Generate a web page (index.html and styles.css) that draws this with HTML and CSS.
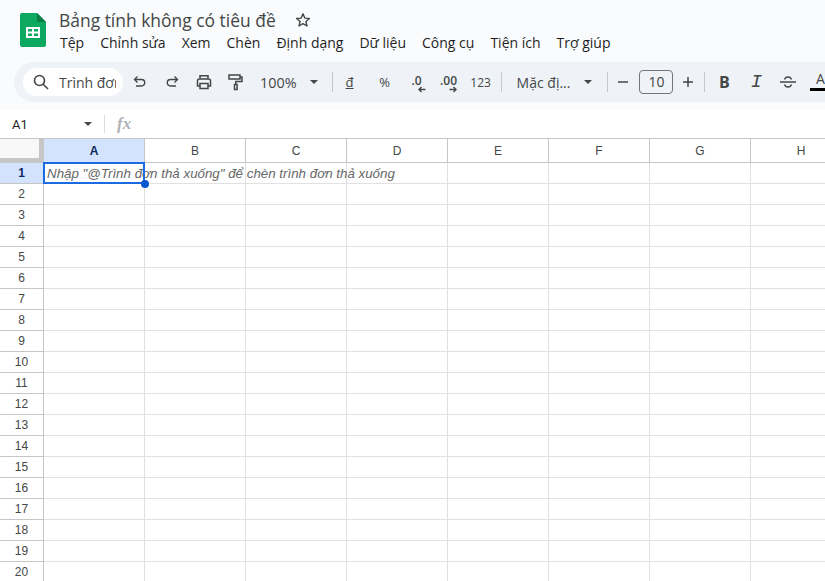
FILE: index.html
```html
<!DOCTYPE html>
<html lang="vi">
<head>
    <meta charset="UTF-8">
    <title>Bảng tính không có tiêu đề</title>
    <link rel="stylesheet" href="styles.css">
</head>

<body>
    <header class="top">
        <div class="title-bar">
            <svg class="logo" width="28" height="36" viewBox="0 0 28 36">
                <path d="M3 1h15l9 9v23a2 2 0 0 1-2 2H3a2 2 0 0 1-2-2V3a2 2 0 0 1 2-2z" fill="#0da960"/>
                <path d="M18 1l9 9h-7a2 2 0 0 1-2-2z" fill="#0a7d47"/>
                <path d="M7 15h14v11H7z M9 17v2.5h4V17z M15 17v2.5h4V17z M9 21.500v2.500h4v-2.500z M15 21.500v2.500h4v-2.500z" fill="#fff" fill-rule="evenodd"/>
            </svg>
            <div class="title-text">
                <div class="doc-title">
                    <span>Bảng tính không có tiêu đề</span>
                    <svg class="star" width="16" height="16" viewBox="0 0 16 16">
                        <path d="M8 1.800l1.800 4.300 4.600.4-3.500 3 1.100 4.500L8 11.600 4 14l1.100-4.500-3.500-3 4.600-.4z" fill="none" stroke="#444746" stroke-width="1.400" stroke-linejoin="round"/>
                    </svg>
                </div>
                <nav class="menu">
                    <span>Tệp</span>
                    <span>Chỉnh sửa</span>
                    <span>Xem</span>
                    <span>Chèn</span>
                    <span>Định dạng</span>
                    <span>Dữ liệu</span>
                    <span>Công cụ</span>
                    <span>Tiện ích</span>
                    <span>Trợ giúp</span>
                </nav>
            </div>
        </div>

        <div class="toolbar">
            <div class="search">
                <svg width="18" height="18" viewBox="0 0 18 18">
                    <circle cx="7.500" cy="7.500" r="5" fill="none" stroke="#444746" stroke-width="1.600"/>
                    <path d="M11.200 11.200L16 16" stroke="#444746" stroke-width="1.600"/>
                </svg>
                <span class="search-text">Trình đơn</span>
            </div>
            <button class="tool first-tool">
                <svg width="16" height="16" viewBox="0 0 16 16"><path d="M5.500 2.500L2.500 5.500l3 3M2.500 5.500h7a3.250 3.250 0 0 1 0 6.500H4" fill="none" stroke="#444746" stroke-width="1.400"/></svg>
            </button>
            <button class="tool">
                <svg width="16" height="16" viewBox="0 0 16 16"><path d="M10.500 2.500l3 3-3 3M13.500 5.500h-7a3.250 3.250 0 0 0 0 6.500H12" fill="none" stroke="#444746" stroke-width="1.400"/></svg>
            </button>
            <button class="tool">
                <svg width="18" height="18" viewBox="0 0 18 18"><path d="M5 6V2.800h8V6M5 13H2.500V7.800a1.800 1.800 0 0 1 1.800-1.800h9.400a1.800 1.800 0 0 1 1.800 1.800V13H13M5 10.500h8v5H5z" fill="none" stroke="#444746" stroke-width="1.500"/></svg>
            </button>
            <button class="tool">
                <svg width="18" height="18" viewBox="0 0 18 18"><path d="M2 2h11v4H2zM13 4h2v4.500H8.800v3M7.500 11.500h2.600v5H7.500z" fill="none" stroke="#444746" stroke-width="1.500"/></svg>
            </button>
            <span class="zoom-value">100%</span>
            <span class="caret"></span>
            <span class="sep sep-zoom"></span>
            <span class="tool text-tool currency">đ</span>
            <span class="tool text-tool percent">%</span>
            <span class="tool text-tool decimals">.0
                <svg class="arrow" width="9" height="7" viewBox="0 0 9 7"><path d="M8.500 3.500H2M4.500 1L2 3.500 4.500 6" fill="none" stroke="#444746" stroke-width="1.400"/></svg>
            </span>
            <span class="tool text-tool decimals">.00
                <svg class="arrow" width="9" height="7" viewBox="0 0 9 7"><path d="M.5 3.500H7M4.500 1L7 3.500 4.500 6" fill="none" stroke="#444746" stroke-width="1.400"/></svg>
            </span>
            <span class="tool text-tool number">123</span>
            <span class="sep sep-number"></span>
            <span class="font-name">Mặc đị...</span>
            <span class="caret font-caret"></span>
            <span class="sep sep-font"></span>
            <span class="tool text-tool step">
                <svg width="12" height="12" viewBox="0 0 12 12"><path d="M1 6h10" stroke="#444746" stroke-width="1.500"/></svg>
            </span>
            <span class="font-size">10</span>
            <span class="tool text-tool step">
                <svg width="12" height="12" viewBox="0 0 12 12"><path d="M1 6h10M6 1v10" stroke="#444746" stroke-width="1.500"/></svg>
            </span>
            <span class="sep sep-step"></span>
            <span class="tool text-tool bold">B</span>
            <span class="tool text-tool italic">I</span>
            <span class="tool text-tool">
                <svg width="16" height="14" viewBox="0 0 16 14"><path d="M0 7h16M4.500 4.500C5 2.800 6.200 2 8 2s3 .8 3.500 2.500M4.500 9.500C5 11.200 6.200 12 8 12s3-.8 3.500-2.500" fill="none" stroke="#444746" stroke-width="1.300"/></svg>
            </span>
            <span class="text-color">A</span>
        </div>
    </header>

    <div class="formula-bar">
        <span class="cell-name">A1</span>
        <span class="caret"></span>
        <span class="sep formula-sep"></span>
        <span class="fx">fx</span>
    </div>

    <table class="sheet">
        <thead>
            <tr><th class="corner"></th><th class="active">A</th><th>B</th><th>C</th><th>D</th><th>E</th><th>F</th><th>G</th><th>H</th></tr>
        </thead>
        <tbody>
            <tr>
                <th class="active">1</th>
                <td class="selected">
                    <span class="hint">Nhập "@Trình đơn thả xuống" để chèn trình đơn thả xuống</span>
                    <span class="selection"></span>
                    <span class="handle"></span>
                </td>
                <td></td><td></td><td></td><td></td><td></td><td></td><td></td>
            </tr>
            <tr><th>2</th><td></td><td></td><td></td><td></td><td></td><td></td><td></td><td></td></tr>
            <tr><th>3</th><td></td><td></td><td></td><td></td><td></td><td></td><td></td><td></td></tr>
            <tr><th>4</th><td></td><td></td><td></td><td></td><td></td><td></td><td></td><td></td></tr>
            <tr><th>5</th><td></td><td></td><td></td><td></td><td></td><td></td><td></td><td></td></tr>
            <tr><th>6</th><td></td><td></td><td></td><td></td><td></td><td></td><td></td><td></td></tr>
            <tr><th>7</th><td></td><td></td><td></td><td></td><td></td><td></td><td></td><td></td></tr>
            <tr><th>8</th><td></td><td></td><td></td><td></td><td></td><td></td><td></td><td></td></tr>
            <tr><th>9</th><td></td><td></td><td></td><td></td><td></td><td></td><td></td><td></td></tr>
            <tr><th>10</th><td></td><td></td><td></td><td></td><td></td><td></td><td></td><td></td></tr>
            <tr><th>11</th><td></td><td></td><td></td><td></td><td></td><td></td><td></td><td></td></tr>
            <tr><th>12</th><td></td><td></td><td></td><td></td><td></td><td></td><td></td><td></td></tr>
            <tr><th>13</th><td></td><td></td><td></td><td></td><td></td><td></td><td></td><td></td></tr>
            <tr><th>14</th><td></td><td></td><td></td><td></td><td></td><td></td><td></td><td></td></tr>
            <tr><th>15</th><td></td><td></td><td></td><td></td><td></td><td></td><td></td><td></td></tr>
            <tr><th>16</th><td></td><td></td><td></td><td></td><td></td><td></td><td></td><td></td></tr>
            <tr><th>17</th><td></td><td></td><td></td><td></td><td></td><td></td><td></td><td></td></tr>
            <tr><th>18</th><td></td><td></td><td></td><td></td><td></td><td></td><td></td><td></td></tr>
            <tr><th>19</th><td></td><td></td><td></td><td></td><td></td><td></td><td></td><td></td></tr>
            <tr><th>20</th><td></td><td></td><td></td><td></td><td></td><td></td><td></td><td></td></tr>
        </tbody>
    </table>
</body>
</html>
```

FILE: styles.css
```css
* {
    box-sizing: border-box;
    margin: 0;
    padding: 0;
}

html,
body {
    height: 100%;
    overflow: hidden;
}

body {
    background-color: white;
    font-family: 'Open Sans', 'Liberation Sans', sans-serif;
    color: #444746;
}

.top {
    background-color: #f9fbfd;
    height: 110px;
    padding: 0 14px;
}

.title-bar {
    display: flex;
    height: 62px;
    padding: 12px 0 0 5px;
}

.logo {
    flex: none;
    margin-right: 12px;
}

.title-text {
    min-width: 0;
    margin-top: -2px;
}

.doc-title {
    display: flex;
    align-items: center;
    gap: 19px;
    height: 19px;
    font-size: 17.450px;
    color: #444746;
}

.star {
    margin-top: 1px;
}

.menu {
    display: flex;
    gap: 16px;
    margin-top: 4px;
    margin-left: 1px;
    font-size: 14px;
    line-height: 20px;
    color: #1f1f1f;
    white-space: nowrap;
}

.toolbar {
    display: flex;
    align-items: center;
    height: 40px;
    width: 830px;
    padding-left: 9px;
    background-color: #eff3f8;
    border-radius: 20px 0 0 20px;
    white-space: nowrap;
}

.search {
    display: flex;
    flex: none;
    align-items: center;
    width: 100px;
    height: 28px;
    padding-left: 9px;
    background-color: white;
    border-radius: 14px;
    font-size: 14px;
    overflow: hidden;
}

.search-text {
    margin-left: 9px;
    width: 57px;
    overflow: hidden;
}

.tool {
    display: flex;
    flex: none;
    align-items: center;
    justify-content: center;
    width: 32px;
    height: 28px;
    background: none;
    border: none;
}

.first-tool {
    margin-left: 1px;
}

.text-tool {
    font-size: 12px;
}

.zoom-value {
    margin-left: 8px;
    font-size: 14.400px;
}

.caret {
    flex: none;
    width: 0;
    height: 0;
    margin-left: 13px;
    border-left: 4px solid transparent;
    border-right: 4px solid transparent;
    border-top: 4px solid #444746;
}

.sep {
    flex: none;
    width: 1px;
    height: 20px;
    background-color: #c7c7c7;
}

.sep-zoom {
    margin-left: 14px;
    margin-right: 1px;
}

.currency {
    margin-right: 3px;
    text-decoration: underline;
    font-size: 13px;
}

.percent {
    font-size: 13px;
}

.decimals {
    position: relative;
    align-items: flex-start;
    padding-top: 4px;
    font-weight: 600;
}

.arrow {
    position: absolute;
    right: 7px;
    bottom: 3px;
}

.sep-number {
    margin-left: 4px;
}

.font-name {
    margin-left: 15px;
    font-size: 14px;
}

.font-caret {
    margin-left: 14px;
}

.sep-font {
    margin-left: 15px;
}

.step {
    width: 30px;
}

.font-size {
    flex: none;
    width: 34px;
    height: 24px;
    border: 1px solid #747775;
    border-radius: 4px;
    font-size: 14px;
    line-height: 22px;
    text-align: center;
}

.sep-font + .step {
    margin-right: 1px;
}

.sep-step {
    margin-left: 1px;
    margin-right: 3px;
}

.bold {
    font-size: 16px;
    font-weight: 700;
}

.italic {
    font-family: 'Liberation Mono', monospace;
    font-size: 19px;
    font-style: italic;
}

.text-color {
    flex: none;
    width: 20px;
    height: 18px;
    margin-left: 6px;
    border-bottom: 3px solid black;
    font-size: 14px;
    line-height: 12px;
    text-align: center;
}

.formula-bar {
    display: flex;
    align-items: center;
    height: 29px;
    border-bottom: 1px solid #c4c7c5;
    background-color: white;
}

.cell-name {
    width: 84px;
    padding-left: 12px;
    font-family: 'Roboto', sans-serif;
    font-size: 13px;
    color: #1f1f1f;
}

.formula-bar .caret {
    margin-left: 0;
}

.formula-sep {
    margin-left: 12px;
    height: 18px;
    background-color: #dadce0;
}

.fx {
    margin-left: 12px;
    font-family: 'Liberation Serif', serif;
    font-size: 17px;
    font-style: italic;
    font-weight: 700;
    color: #b0b3b6;
}

.sheet {
    table-layout: fixed;
    width: 851px;
    border-collapse: separate;
    border-spacing: 0;
    font-family: 'Liberation Sans', sans-serif;
    font-size: 12px;
}

.sheet thead th {
    width: 101px;
    height: 24px;
    border-right: 1px solid #c4c7c5;
    border-bottom: 1px solid #c4c7c5;
    font-weight: 400;
    color: #444746;
}

.sheet thead .corner {
    width: 44px;
    background-color: #f8f8f8;
    border-right: 5px solid #c4c7c5;
    border-bottom: 5px solid #c4c7c5;
}

.sheet thead .active {
    background-color: #d3e3fd;
    font-weight: 700;
    color: #0b2b5e;
}

.sheet tbody th {
    height: 21px;
    border-right: 1px solid #c4c7c5;
    border-bottom: 1px solid #c4c7c5;
    font-weight: 400;
    color: #444746;
}

.sheet tbody th.active {
    background-color: #d3e3fd;
    font-weight: 700;
    color: #0b2b5e;
}

td {
    border-right: 1px solid #e1e1e1;
    border-bottom: 1px solid #e1e1e1;
}

.selected {
    position: relative;
}

.hint {
    display: block;
    padding: 2px 0 0 3px;
    font-family: 'Liberation Sans', sans-serif;
    font-size: 13.330px;
    font-style: italic;
    line-height: 18px;
    color: #666;
    white-space: nowrap;
}

.selection {
    position: absolute;
    top: -1px;
    left: -1px;
    right: -1px;
    bottom: -1px;
    border: 2px solid #1a6ae0;
}

.handle {
    position: absolute;
    right: -5px;
    bottom: -5px;
    width: 8px;
    height: 8px;
    background-color: #0b57d0;
    border-radius: 50%;
}
```
